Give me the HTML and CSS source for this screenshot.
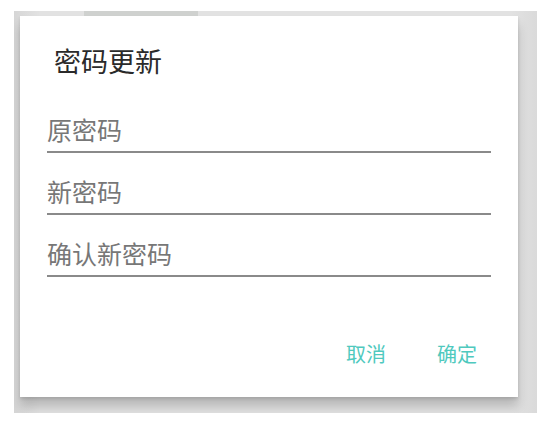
FILE: index.html
```html
<!DOCTYPE html>
<html lang="zh-CN">
<head>
  <meta charset="UTF-8" />
  <meta name="viewport" content="width=device-width, initial-scale=1.0"/>
  <title>密码更新</title>
  <link rel="stylesheet" href="styles.css">
</head>
<body>
  <div class="backdrop">
    <div class="tab-shadow"></div>
    <div class="dialog">
      <h2 class="dialog-title">密码更新</h2>

      <div class="fields">
        <label class="field"><input type="password" placeholder="原密码" /></label>
        <label class="field"><input type="password" placeholder="新密码" /></label>
        <label class="field"><input type="password" placeholder="确认新密码" /></label>
      </div>

      <div class="actions">
        <button class="btn">取消</button>
        <button class="btn">确定</button>
      </div>
    </div>
  </div>
</body>
</html>
```

FILE: styles.css
```css
body {
  margin: 0;
  padding: 0;
  background: #fff;
  font-family: "Noto Sans CJK SC", "Noto Sans", sans-serif;
}

.backdrop {
  position: relative;
  box-sizing: border-box;
  width: 523px;
  height: 402px;
  margin: 11px 0 0 14px;
  padding: 5px 0 0 6px;
  background: linear-gradient(90deg, #d6d6d6, #e2e2e2 5%, #e2e2e2 95%, #dadada);
  overflow: hidden;
}

.tab-shadow {
  position: absolute;
  top: 0;
  left: 70px;
  width: 114px;
  height: 5px;
  background: #cfd1cf;
}

.dialog {
  position: relative;
  box-sizing: border-box;
  width: 498px;
  height: 381px;
  background: #fff;
  padding: 27px 27px 0 27px;
  box-shadow: 0 10px 10px rgba(0, 0, 0, 0.18), 0 2px 3px rgba(0, 0, 0, 0.12);
  display: flex;
  flex-direction: column;
}

.dialog-title {
  margin: 0 0 0 7px;
  font-size: 27px;
  font-weight: normal;
  line-height: 36px;
  color: #2a2a2a;
}

.fields {
  margin-top: 33px;
  display: flex;
  flex-direction: column;
  gap: 21px;
}

.field input {
  display: block;
  width: 444px;
  box-sizing: border-box;
  height: 41px;
  padding: 0 0 6px 0;
  border: none;
  border-bottom: 2px solid #8a8a8a;
  outline: none;
  font-family: inherit;
  font-size: 25px;
  color: #333;
  background: transparent;
}

.field input::placeholder {
  color: #777;
}

.actions {
  margin-top: 62px;
  display: flex;
  justify-content: flex-end;
  gap: 51px;
  padding-right: 14px;
}

.btn {
  background: none;
  border: none;
  padding: 0;
  font-family: inherit;
  font-size: 20px;
  color: #4fc9be;
  cursor: pointer;
}
```
